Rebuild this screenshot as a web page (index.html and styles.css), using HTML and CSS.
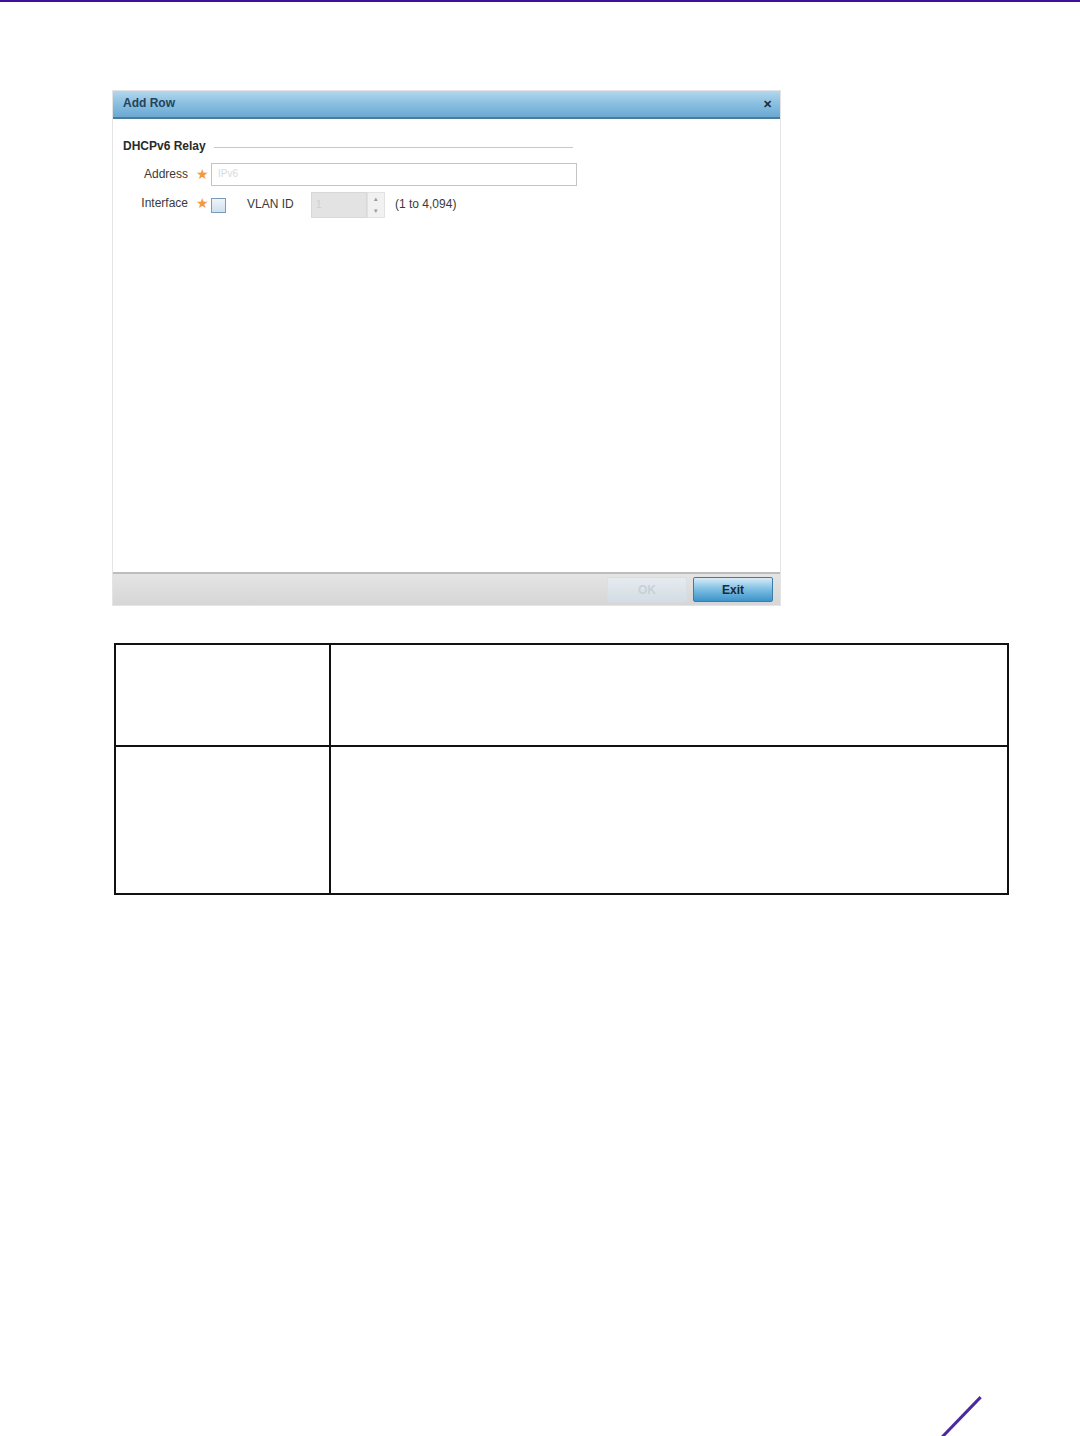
FILE: index.html
```html
<!DOCTYPE html>
<html lang="en">
<head>
    <meta charset="UTF-8">
    <title>Add Row - DHCPv6 Relay</title>
    <link rel="stylesheet" href="styles.css">
</head>
<body>
    <div class="top-rule"></div>

    <div class="page">
        <div class="dialog">
            <div class="dialog-title">
                <span>Add Row</span>
                <span class="close">&#x2715;</span>
            </div>

            <div class="dialog-body">
                <div class="group-head">
                    <span>DHCPv6 Relay</span>
                    <span class="group-line"></span>
                </div>

                <div class="field-row">
                    <label class="field-label">Address</label>
                    <span class="star">&#9733;</span>
                    <div class="text-input">IPv6</div>
                </div>

                <div class="field-row">
                    <label class="field-label">Interface</label>
                    <span class="star">&#9733;</span>
                    <span class="checkbox"></span>
                    <span class="vlan-label">VLAN ID</span>
                    <div class="spinner">
                        <div class="spin-box">1</div>
                        <div class="spin-arrows">
                            <span>&#9652;</span>
                            <span>&#9662;</span>
                        </div>
                    </div>
                    <span class="range">(1 to 4,094)</span>
                </div>
            </div>

            <div class="dialog-footer">
                <button class="btn btn-off">OK</button>
                <button class="btn btn-exit">Exit</button>
            </div>
        </div>

        <table class="param-table">
            <tr class="row-a">
                <td class="col-name"></td>
                <td></td>
            </tr>
            <tr class="row-b">
                <td class="col-name"></td>
                <td></td>
            </tr>
        </table>
    </div>

    <div class="corner-mark"></div>
</body>
</html>
```

FILE: styles.css
```css
* {
    margin: 0;
    padding: 0;
    box-sizing: border-box;
}

html, body {
    height: 100%;
}

body {
    font-family: "Liberation Sans", Arial, sans-serif;
    background: #ffffff;
    color: #222;
    position: relative;
    overflow: hidden;
}

.top-rule {
    height: 2px;
    background: #40109a;
}

.page {
    padding: 88px 0 0 112px;
}

/* Dialog */
.dialog {
    width: 669px;
    height: 516px;
    display: flex;
    flex-direction: column;
    background: #fff;
    border: 1px solid #e4e4e4;
}

.dialog-title {
    height: 28px;
    display: flex;
    align-items: center;
    justify-content: space-between;
    padding: 0 8px 3px 10px;
    background: linear-gradient(#b2d7ee, #8cc1e1 45%, #69a9d3);
    border-bottom: 2px solid #4d7a98;
    font-size: 12px;
    font-weight: bold;
    color: #24435c;
}

.close {
    font-size: 11px;
    font-weight: bold;
    color: #1e2c3a;
    padding-top: 3px;
}

.dialog-body {
    flex: 1;
    padding: 20px 0 0 10px;
}

.group-head {
    display: flex;
    align-items: center;
    width: 450px;
    font-size: 12px;
    font-weight: bold;
    color: #2a2a2a;
    margin-bottom: 9px;
}

.group-line {
    flex: 1;
    height: 1px;
    background: #c8c8c8;
    margin-left: 8px;
    margin-top: 3px;
}

.field-row {
    display: flex;
    align-items: center;
    height: 24px;
    margin-bottom: 5px;
    font-size: 12px;
    color: #3a3a3a;
}

.field-label {
    width: 65px;
    text-align: right;
}

.star {
    color: #f29a3a;
    font-size: 14px;
    width: 23px;
    text-align: center;
    padding-left: 6px;
}

.text-input {
    width: 366px;
    height: 23px;
    border: 1px solid #c4c4c4;
    padding: 4px 6px;
    font-size: 10px;
    color: #dadada;
}

.checkbox {
    width: 15px;
    height: 15px;
    margin: 5px 0 0 0;
    border: 1px solid #7b9cb8;
    background: linear-gradient(#eef4f9, #cfe0ee);
}

.vlan-label {
    margin-left: 21px;
    width: 64px;
    color: #3a3a3a;
    padding-top: 2px;
}

.spinner {
    display: flex;
    align-items: stretch;
    height: 26px;
    margin-top: 4px;
}

.spin-box {
    width: 56px;
    background: #e3e3e3;
    border: 1px solid #d8d8d8;
    color: #cfcfcf;
    font-size: 10px;
    padding: 6px 4px;
}

.spin-arrows {
    width: 18px;
    display: flex;
    flex-direction: column;
    background: #f1f1f1;
    border: 1px solid #e2e2e2;
    font-size: 7px;
    color: #999;
    text-align: center;
    line-height: 12px;
}

.range {
    margin-left: 10px;
    color: #3a3a3a;
    padding-top: 2px;
}

.dialog-footer {
    height: 33px;
    display: flex;
    justify-content: flex-end;
    align-items: center;
    gap: 6px;
    padding-right: 7px;
    background: linear-gradient(#e4e4e4, #d6d6d6);
    border-top: 2px solid #bdbdbd;
}

.btn {
    width: 80px;
    height: 25px;
    font-family: inherit;
    font-size: 12px;
    font-weight: bold;
    border-radius: 2px;
}

.btn-off {
    background: linear-gradient(#e6ebef, #d3dde5);
    border: 1px solid #d8dee3;
    color: #c8d0d6;
}

.btn-exit {
    background: linear-gradient(#d8ecf8, #7bbde3 50%, #3d94cb);
    border: 1px solid #3d7ca6;
    color: #1a2a3a;
}

/* Table below */
.param-table {
    margin: 37px 0 0 2px;
    width: 895px;
    border-collapse: collapse;
}

.param-table td {
    border: 2px solid #111;
}

.col-name {
    width: 215px;
}

.row-a td {
    height: 102px;
}

.row-b td {
    height: 148px;
}

.corner-mark {
    position: absolute;
    left: 959px;
    top: 1389px;
    width: 3px;
    height: 58px;
    background: #4b2a9e;
    transform: rotate(44deg);
}
```
